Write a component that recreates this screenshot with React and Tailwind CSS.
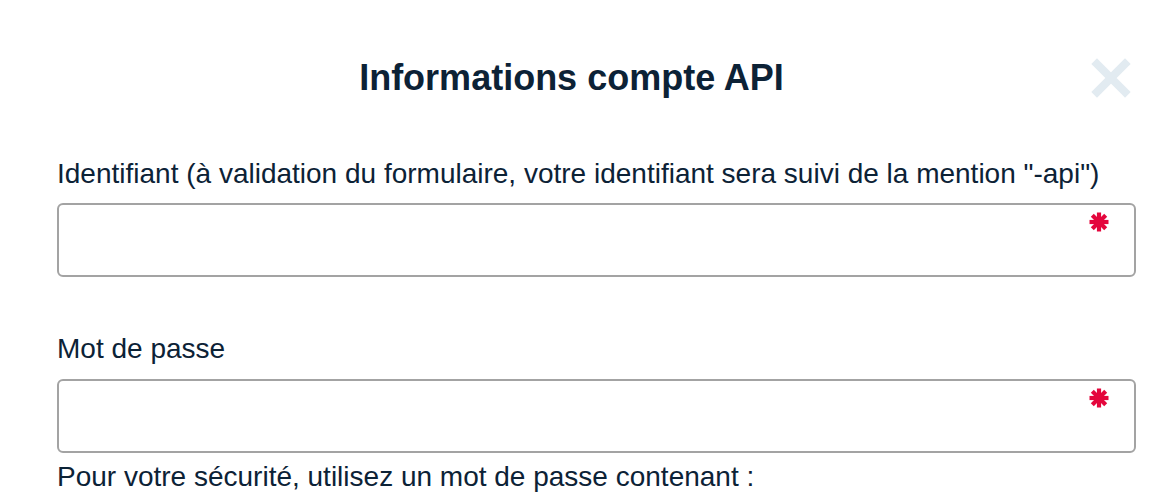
function Required() {
    return (
        <svg className="absolute right-[25px] top-[7px]" width="20" height="20" viewBox="0 0 20 20">
            <g stroke="#e4063c" strokeWidth="4.2" strokeLinecap="butt">
                <path d="M10 0.5 V19.5" />
                <path d="M0.5 10 H19.5" />
                <path d="M3.3 3.3 L16.7 16.7" />
                <path d="M16.7 3.3 L3.3 16.7" />
            </g>
            <circle cx="10" cy="10" r="4.5" fill="#e4063c" />
        </svg>
    );
}

export default function App() {
    return (
        <div className="w-[1176px] h-[500px] overflow-hidden bg-white pl-[57px] pr-[40px] text-[#0c2236]" style={{ fontFamily: '"Liberation Sans", Arial, sans-serif' }}>
            {/* Header */}
            <div className="flex items-center h-[56px] mt-[50px]">
                <h1 className="flex-1 text-center text-[36px] font-bold leading-[40px]">Informations compte API</h1>
                <button className="w-[50px] h-[50px] flex items-center justify-center">
                    <svg width="40" height="40" viewBox="0 0 40 40">
                        <path d="M6 6 L34 34 M34 6 L6 34" stroke="#e2ebf1" strokeWidth="8" strokeLinecap="square" />
                    </svg>
                </button>
            </div>

            <div className="mt-[52px] text-[28px] leading-[32px]">
                Identifiant (à validation du formulaire, votre identifiant sera suivi de la mention "-api")
            </div>
            <div className="relative mt-[13px] h-[74px] rounded-[6px] border-2 border-[#a3a3a3]">
                <Required />
            </div>

            <div className="mt-[56px] text-[28px] leading-[32px]">Mot de passe</div>
            <div className="relative mt-[14px] h-[74px] rounded-[6px] border-2 border-[#a3a3a3]">
                <Required />
            </div>

            <div className="mt-[8px] text-[28px] leading-[32px]">Pour votre sécurité, utilisez un mot de passe contenant :</div>
        </div>
    );
}
